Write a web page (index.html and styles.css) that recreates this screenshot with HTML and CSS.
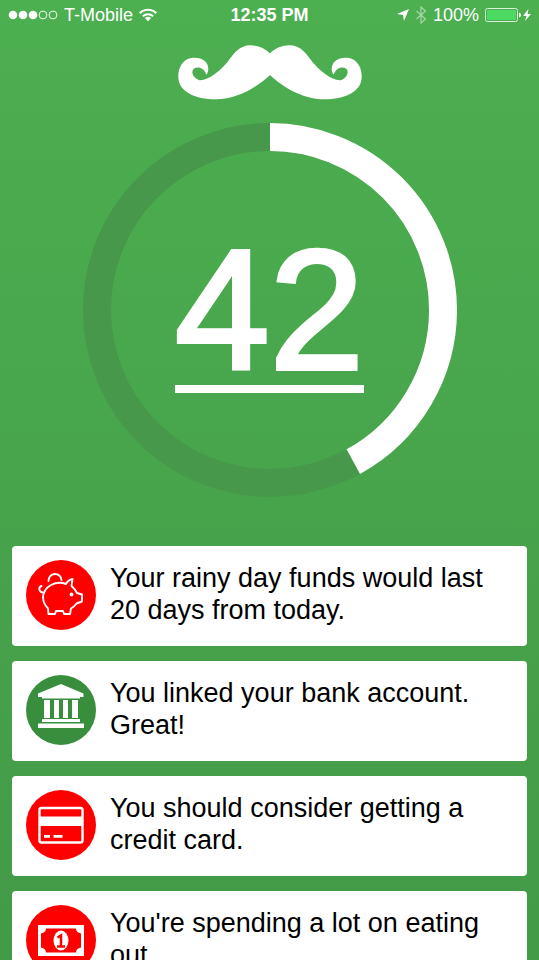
FILE: index.html
```html
<!DOCTYPE html>
<html lang="en">
<head>
<meta charset="utf-8">
<meta name="viewport" content="width=device-width, initial-scale=1">
<title>Score</title>
<link rel="stylesheet" href="styles.css">
</head>
<body>
<div class="app">
  <header class="status">
    <div class="status-side">
      <svg class="signal" width="50" height="10" viewBox="0 0 50 10" aria-hidden="true">
        <g fill="#fff"><circle cx="5" cy="5" r="4.3"/><circle cx="15" cy="5" r="4.3"/><circle cx="25" cy="5" r="4.3"/></g>
        <g fill="none" stroke="#fff" stroke-width="0.9"><circle cx="35" cy="5" r="3.9"/><circle cx="45" cy="5" r="3.9"/></g>
      </svg>
      <span class="carrier">T-Mobile</span>
      <svg width="18" height="14" viewBox="0 0 18 14" aria-hidden="true">
        <g fill="none" stroke="#fff" stroke-width="2"><path d="M.8 5.2a11.6 11.6 0 0 1 16.4 0"/><path d="M3.8 8.3a7.4 7.4 0 0 1 10.4 0"/></g>
        <path d="M9 13.2 5.9 10.1a4.4 4.4 0 0 1 6.2 0z" fill="#fff"/>
      </svg>
    </div>
    <time class="clock">12:35 PM</time>
    <div class="status-side status-right">
      <svg width="12" height="12" viewBox="0 0 12 12" aria-hidden="true"><path d="M12 0 7 12 6 6 0 5z" fill="#fff"/></svg>
      <svg class="bluetooth" width="12" height="18" viewBox="0 0 12 18" aria-hidden="true"><path d="M1.5 5 10.5 13 6 17V1l4.5 4-9 8" fill="none" stroke="#fff" stroke-width="1.2"/></svg>
      <span>100%</span>
      <span class="power">
        <svg width="36" height="14" viewBox="0 0 36 14" aria-hidden="true">
          <rect x=".5" y=".5" width="32" height="13" rx="2" fill="none" stroke="#d9f0da"/>
          <rect x="2" y="2" width="29" height="10" rx="1" fill="#4cd964"/>
          <path d="M34 4.5q2 .5 2 2.500t-2 2.500z" fill="#fff"/>
        </svg>
        <svg width="8" height="12" viewBox="0 0 8 12" aria-hidden="true"><path d="M5.500 0 0 7h3.500L2 12l6-7H4.500z" fill="#fff"/></svg>
      </span>
    </div>
  </header>

  <main class="content">
    <svg class="logo" viewBox="20 25 558 170" role="img" aria-label="Mustache">
      <g fill="#fff">
        <path id="half" d="M300 54C283 37 262 29 241 29C207 29 190 54 171 80C150 105 113 136 87 134C70 128 60 110 70 99C82 91 101 95 108 117C116 108 116 92 107 80C97 68 80 65 63 67C36 71 22 98 24 128C28 170 75 191 137 191C203 190 262 153 300 117Z"/>
        <use href="#half" transform="matrix(-1 0 0 1 598 0)"/>
      </g>
    </svg>

    <section class="gauge" aria-label="Score">
      <svg class="ring" viewBox="0 0 374 374" aria-hidden="true">
        <circle class="track" cx="187" cy="187" r="173"/>
        <circle class="value" cx="187" cy="187" r="173" pathLength="100" stroke-dasharray="42 58" transform="rotate(-90 187 187)"/>
      </svg>
      <div class="score">42</div>
    </section>

    <ul class="cards">
      <li class="card">
        <svg class="icon alert" viewBox="0 0 70 70" aria-hidden="true">
          <g fill="none" stroke="#fff" stroke-width="1.900" stroke-linejoin="round" stroke-linecap="round">
            <path d="M25 25C30 22.500 36 22.500 40 24Q42 20 46.500 19L45.500 26Q49 29 51 33L56 34.500V41.500L50.500 43.500Q48 47 45 48.500L44 54H38L37 51H30L29 54H22.500L22 48.500C18.500 45 17 42 17 37C17.500 31 20.500 27.500 25 25Z"/>
            <path d="M22.500 21a6.500 6.500 0 0 1 13-1"/>
            <path d="M15.500 26C12 27 13 32.500 17 32.500"/>
          </g>
          <circle cx="45.500" cy="34.500" r="1.900" fill="#fff"/>
        </svg>
        <p>Your rainy day funds would last 20 days from today.</p>
      </li>
      <li class="card">
        <svg class="icon good" viewBox="0 0 70 70" aria-hidden="true">
          <path fill="#fff" d="M35 9 57.500 18.500V22H54V23.500H16V22H12V18.500ZM18 25h6v18h-6zM28 25h5v18h-5zM37 25h5v18h-5zM46 25h6v18h-6zM16 44h38v3H16zM12 48.500h46v4.500H12z"/>
        </svg>
        <p>You linked your bank account. Great!</p>
      </li>
      <li class="card">
        <svg class="icon alert" viewBox="0 0 70 70" aria-hidden="true">
          <rect x="13.500" y="18" width="43" height="34.500" rx="2" fill="none" stroke="#fff" stroke-width="2.400"/>
          <path fill="#fff" d="M14 26.500h43V36H14zM18 45h6v2.800h-6zM27.500 45h9v2.800h-9z"/>
        </svg>
        <p>You should consider getting a credit card.</p>
      </li>
      <li class="card">
        <svg class="icon alert" viewBox="0 0 70 70" aria-hidden="true">
          <rect x="12" y="20" width="46" height="31" fill="#fff"/>
          <path fill="red" d="M20 23.500H50Q50 27.500 55 28.500V42.500Q50 43.500 50 47.500H20Q20 43.500 15 42.500V28.500Q20 27.500 20 23.500Z"/>
          <ellipse cx="35" cy="35.500" rx="7.500" ry="10" fill="#fff"/>
          <path d="M31.500 32.500 35 30.500V41M31 41.500h8" fill="none" stroke="red" stroke-width="2.500"/>
        </svg>
        <p>You're spending a lot on eating out.</p>
      </li>
    </ul>
  </main>
</div>
</body>
</html>
```
FILE: styles.css
```css
* {
  box-sizing: border-box;
}

body {
  margin: 0;
  font-family: "Liberation Sans", Arial, sans-serif;
}

.app {
  display: flex;
  flex-direction: column;
  height: 100vh;
  background: linear-gradient(#4caf50, #439a47);
}

.status {
  display: flex;
  align-items: center;
  flex: none;
  height: 30px;
  padding: 0 8px;
  color: #fff;
  font-size: 18px;
}

.status-side {
  display: flex;
  align-items: center;
  flex: 1;
  gap: 6px;
}

.status-right {
  justify-content: flex-end;
}

.power {
  display: flex;
  align-items: center;
  gap: 2px;
}

.bluetooth {
  opacity: 0.5;
}

.clock {
  font-weight: bold;
}

.content {
  flex: 1;
  min-height: 0;
  padding: 14px 12px 12px;
  overflow-y: auto;
  scrollbar-width: none;
}

.logo {
  display: block;
  width: 186px;
  margin: 0 auto 22px;
}

.gauge {
  display: grid;
  place-items: center;
  margin-bottom: 49px;
}

.ring,
.score {
  grid-area: 1 / 1;
}

.ring {
  width: 100%;
  max-width: 374px;
}

.ring circle {
  fill: none;
  stroke-width: 28;
}

.ring .track {
  stroke: #47984a;
}

.ring .value {
  stroke: #fff;
}

.score {
  padding-top: 8px;
  border-bottom: 8px solid #fff;
  color: #fff;
  font-size: 170px;
  line-height: 150px;
  -webkit-text-stroke: 4px #fff;
}

.cards {
  display: grid;
  gap: 15px;
  margin: 0;
  padding: 0;
  list-style: none;
}

.card {
  display: flex;
  gap: 14px;
  padding: 14px 14px 16px;
  border-radius: 4px;
  background: #fff;
}

.card p {
  margin: 2px 0 0;
  color: #000;
  font-size: 27px;
  line-height: 32px;
}

.icon {
  flex: none;
  width: 70px;
  height: 70px;
  border-radius: 50%;
}

.alert {
  background: #f00;
}

.good {
  background: #388e3c;
}
```
